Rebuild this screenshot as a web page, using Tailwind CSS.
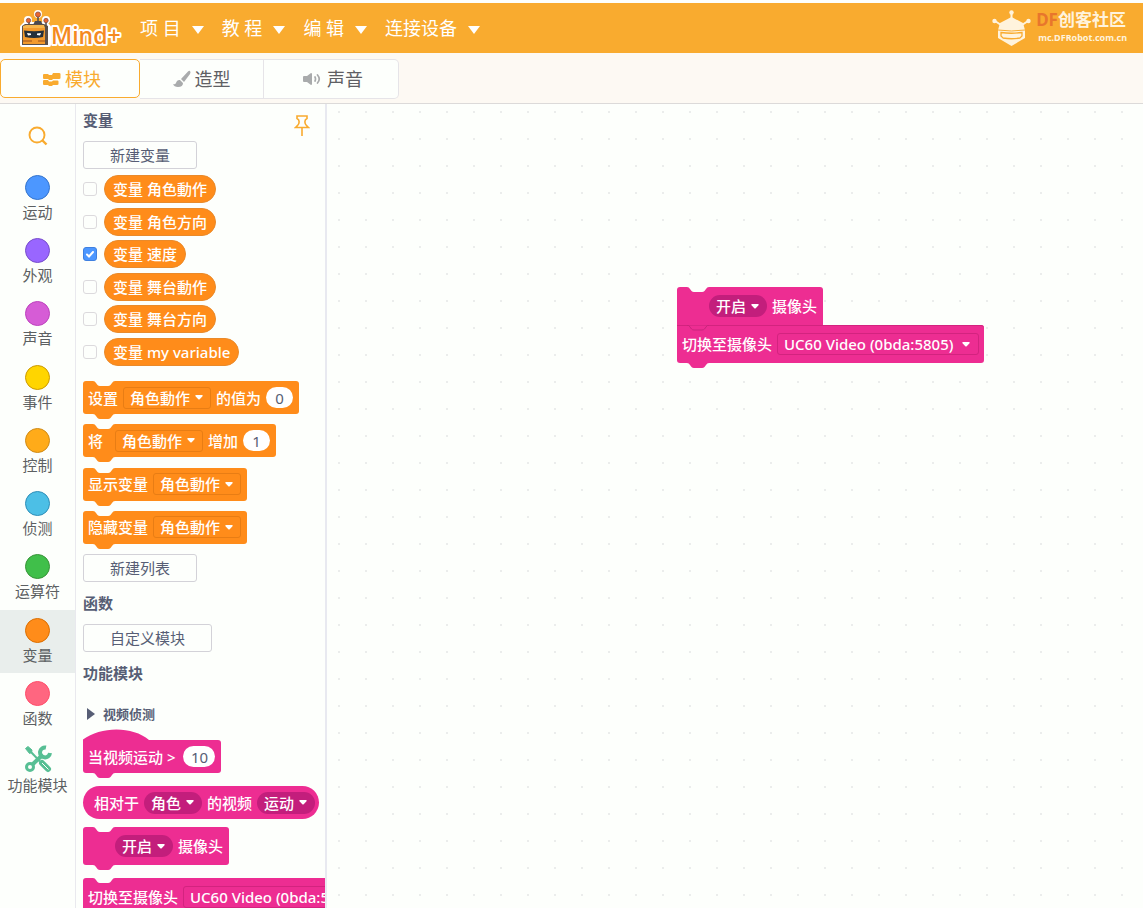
<!DOCTYPE html>
<html lang="zh-CN">
<head>
<meta charset="utf-8">
<title>Mind+</title>
<script src="https://cdn.jsdelivr.net/npm/@tailwindcss/browser@4"></script>
</head>
<body class="h-screen overflow-hidden flex flex-col bg-[#fdfffc] font-['Noto_Sans','Noto_Sans_CJK_SC',sans-serif] text-[15px] leading-5 text-[#575e75]">

<svg class="hidden" aria-hidden="true">
  <symbol id="notch" viewBox="0 0 22 6"><path d="M0 0Q2 0 3 2L4.500 4Q5.500 5 7 5H15Q16.500 5 17.500 4L19 2Q20 0 22 0Z"/></symbol>
  <symbol id="caret" viewBox="0 0 8 5"><path d="M1 0H7Q8.300 .3 7.300 1.400L4.700 4.200Q4 4.900 3.300 4.200L.7 1.400Q-.3 .3 1 0Z" fill="#fff"/></symbol>
  <symbol id="down" viewBox="0 0 12 8"><path d="M0 0H12L6 8Z" fill="#fff"/></symbol>
</svg>

<header class="mt-[3px] h-[50px] shrink-0 bg-[#f9ab2f] flex items-center justify-between pl-5 pr-4 text-white">
  <div class="flex items-center">
    <svg class="w-[104px] h-10 shrink-0" viewBox="0 0 104 40" role="img" aria-label="Mind+">
      <g stroke="#fff" stroke-width="4" stroke-linejoin="round" fill="#fff"><path d="M2 19L5 16H26L29 19V37H2Z"/><circle cx="18" cy="6" r="2"/><circle cx="8" cy="12" r="2"/><circle cx="26" cy="12" r="2"/></g>
      <path d="M9 13V18M18 8V17M26 13V18" stroke="#4b4a4f" stroke-width="1.500"/>
      <path d="M13 17L15 13H21L23 17Z" fill="#4b4a4f"/>
      <circle cx="18" cy="6.500" r="2.600" fill="#e9652f" stroke="#7a4a40" stroke-width=".7"/><circle cx="8.500" cy="12.500" r="2.200" fill="#e9652f" stroke="#7a4a40" stroke-width=".7"/><circle cx="26" cy="12.500" r="2.200" fill="#e9652f" stroke="#7a4a40" stroke-width=".7"/>
      <path d="M2 18L5 16H24L28 18V37H2Z" fill="#5b5048"/>
      <path d="M3 20H25V36H3Z" fill="#f39a2c"/><path d="M3 18L6 17H24L25 20H3Z" fill="#f7b64b"/>
      <path d="M4 22.500Q14 24 24 22.500L23 29Q14 31 5 29Z" fill="#25303a"/>
      <path d="M7 25L11 25.500V27L8 27.500ZM21 25L17 25.500V27L20 27.500Z" fill="#fff"/>
      <path d="M3 32H12V34H3ZM18 32H25V34H18Z" fill="#c97523"/>
      <text x="31" y="36" font-family="Open Sans" font-weight="600" font-size="23" fill="#f58a1f" stroke="#fff" stroke-width="4" stroke-linejoin="round" paint-order="stroke">Mind+</text>
    </svg>
    <nav class="flex items-center pl-4 gap-[18px] text-lg">
      <button class="flex items-center gap-[11px]">项 目<svg class="w-3 h-2 mt-1"><use href="#down"/></svg></button>
      <button class="flex items-center gap-[11px]">教 程<svg class="w-3 h-2 mt-1"><use href="#down"/></svg></button>
      <button class="flex items-center gap-[11px]">编 辑<svg class="w-3 h-2 mt-1"><use href="#down"/></svg></button>
      <button class="flex items-center gap-[11px]">连接设备<svg class="w-3 h-2 mt-1"><use href="#down"/></svg></button>
    </nav>
  </div>
  <a href="#" class="flex items-center gap-[5px] text-[#fff3dd]">
    <svg class="w-[39px] h-[37px]" viewBox="0 0 39 37" aria-hidden="true">
      <g fill="#fff3dd"><circle cx="19.500" cy="2.500" r="2.200"/><circle cx="2.500" cy="11" r="2.200"/><circle cx="36.500" cy="11" r="2.200"/><path d="M19.500 7L31 13L33 20V28L19.500 36L6 28V20L8 13Z"/></g>
      <path d="M19.500 2V9M3 11L9 15M36 11L30 15" stroke="#fff3dd" stroke-width="2"/>
      <path d="M6 20Q19.500 22 33 20" fill="none" stroke="#f9ab2f" stroke-width="1"/>
      <path d="M9 22.500Q19.500 24 30 22.500V26L28 28Q19.500 29.500 11 28L9 26Z" fill="#fff3dd" stroke="#f9ab2f" stroke-width="1.300"/>
    </svg>
    <span class="flex flex-col font-bold">
      <span class="text-[17px] leading-5"><span class="text-[#e8762c]">DF</span>创客社区</span>
      <span class="text-[9px] leading-4 pl-[2px]">mc.DFRobot.com.cn</span>
    </span>
  </a>
</header>

<div class="h-[51px] shrink-0 bg-[#fdf9f3] border-b border-[#dcdad9] flex items-start pt-[6px]">
  <div role="tablist" class="flex h-10 text-lg text-[#5f6064]">
    <button role="tab" aria-selected="true" class="w-[140px] h-[39px] flex items-center justify-center gap-1 rounded-[5px] border border-[#f9ab2f] bg-[#fdfffc] text-[#f9ab2f] pl-1">
      <svg class="w-[18px] h-4" viewBox="0 0 18 16" fill="currentColor"><path d="M1 3Q0 3 0 4V7Q0 8 1 8H5L6 9H9L10 8H16Q17.500 8 17.500 7V3Q17.500 2 16 2H10L9 4H6L5 3ZM1 9Q0 9 0 10V13Q0 14 1 14H5L6 15H9L10 14H14Q15.500 14 15.500 13V10.500Q15.500 9.500 14.500 9.500H10L9 10.500H6L5 9Z"/></svg>模块</button>
    <button role="tab" class="w-[124px] flex items-center justify-center gap-1 border-y border-r border-[#e6e4e8] bg-[#fdfffc]">
      <svg class="w-[18px] h-[18px]" viewBox="0 0 18 18" fill="#a9abac"><path d="M17 1Q18 2 17 4L11 12L8 9L15 1.500Q16.300 .3 17 1ZM7 10L10 13Q10 17 5 17Q1 17 0 14Q2 15 3 13Q4 9.500 7 10Z"/></svg>造型</button>
    <button role="tab" class="w-[135px] flex items-center justify-center gap-[6px] pl-1 rounded-r-[5px] border-y border-r border-[#e6e4e8] bg-[#fdfffc]">
      <svg class="w-[18px] h-4" viewBox="0 0 18 16"><path d="M0 6Q0 5 1 5H4L8 2Q9 2 9 3V13Q9 14 8 14L4 11H1Q0 11 0 10Z" fill="#a9abac"/><path d="M12 6Q13 8 12 10M14.500 4Q18 8 14.500 12" fill="none" stroke="#a9abac" stroke-width="1.700" stroke-linecap="round"/></svg>声音</button>
  </div>
</div>

<main class="flex flex-1 min-h-0">
  <nav class="w-[76px] shrink-0 border-r border-[#e9e9ee] flex flex-col text-[#5c6062]">
    <button class="h-[63px] shrink-0 flex justify-center pt-[22px]" aria-label="搜索"><svg class="w-5 h-5" viewBox="0 0 20 20" fill="none" stroke="#f9ab2f"><circle cx="9" cy="9" r="7.500" stroke-width="1.900"/><path d="M14.500 14.500L18.500 18.500" stroke-width="2.400"/></svg></button>
    <div class="grid grid-rows-9 h-[569px] shrink-0">
      <button class="flex flex-col items-center pt-2 gap-[2px]"><i class="size-[25px] rounded-full bg-[#4c97ff] border border-[#3373cc]"></i>运动</button>
      <button class="flex flex-col items-center pt-2 gap-[2px]"><i class="size-[25px] rounded-full bg-[#9966ff] border border-[#774dcb]"></i>外观</button>
      <button class="flex flex-col items-center pt-2 gap-[2px]"><i class="size-[25px] rounded-full bg-[#d65cd6] border border-[#bd42bd]"></i>声音</button>
      <button class="flex flex-col items-center pt-2 gap-[2px]"><i class="size-[25px] rounded-full bg-[#ffd500] border border-[#cc9900]"></i>事件</button>
      <button class="flex flex-col items-center pt-2 gap-[2px]"><i class="size-[25px] rounded-full bg-[#ffab19] border border-[#cf8b17]"></i>控制</button>
      <button class="flex flex-col items-center pt-2 gap-[2px]"><i class="size-[25px] rounded-full bg-[#4cbfe6] border border-[#2e8eb8]"></i>侦测</button>
      <button class="flex flex-col items-center pt-2 gap-[2px]"><i class="size-[25px] rounded-full bg-[#40bf4a] border border-[#389438]"></i>运算符</button>
      <button class="flex flex-col items-center pt-2 gap-[2px] bg-[#e9eeec]"><i class="size-[25px] rounded-full bg-[#ff8c1a] border border-[#db6e00]"></i>变量</button>
      <button class="flex flex-col items-center pt-2 gap-[2px]"><i class="size-[25px] rounded-full bg-[#ff6680] border border-[#ff4d6a]"></i>函数</button>
    </div>
    <button class="flex flex-col items-center pt-[9px] gap-[2px]">
      <svg class="w-7 h-7" viewBox="0 0 28 28" fill="none" stroke="#57bf94">
        <path d="M1.500 3.500L4 1.500L8 5L7.500 7.500L5.500 8.500Z" fill="#57bf94" stroke-width="1"/>
        <path d="M7 7L16 16.500" stroke-width="2"/><path d="M18 18L24 24" stroke-width="6" stroke-linecap="round"/><path d="M18 18L24.500 24.500" stroke="#fdfffc" stroke-width="1"/>
        <circle cx="6" cy="22" r="3.500" stroke-width="3"/><path d="M9 19L19 9.500" stroke-width="4"/>
        <path d="M22 2.500A5 5 0 1 0 26 8" stroke-width="4"/>
      </svg>功能模块</button>
  </nav>

  <section class="w-[249px] shrink-0 overflow-hidden pl-[7px] pt-[6px] flex flex-col items-start whitespace-nowrap">
    <div class="w-full h-5 flex justify-between items-start pr-[15px]"><h2 class="font-bold">变量</h2>
      <button aria-label="固定" class="mt-[5px]"><svg class="w-4 h-[22px]" viewBox="0 0 16 22" fill="none" stroke="#f9ab2f" stroke-width="1.600"><path d="M3 1H13V3.500Q10.500 4.500 11 7.500Q11 9.500 14.500 12.500H1.500Q5 9.500 5 7.500Q5.500 4.500 3 3.500ZM8 13V21"/></svg></button></div>
    <button class="mt-[11px] w-[114px] h-7 shrink-0 border border-[#d3d2d8] rounded-[3px]">新建变量</button>

    <div class="mt-1 h-[195px] shrink-0 grid grid-rows-6 items-center text-white font-medium">
      <label class="flex items-center gap-[7px]"><input type="checkbox" class="appearance-none size-[14px] rounded-[3px] border border-[#dcdadd]"><span class="h-7 px-2 flex items-center rounded-full bg-[#ff8c1a] border border-[#ea8a2a]">变量 角色動作</span></label>
      <label class="flex items-center gap-[7px]"><input type="checkbox" class="appearance-none size-[14px] rounded-[3px] border border-[#dcdadd]"><span class="h-7 px-2 flex items-center rounded-full bg-[#ff8c1a] border border-[#ea8a2a]">变量 角色方向</span></label>
      <label class="flex items-center gap-[7px]"><span class="grid size-[14px]"><input type="checkbox" checked class="col-start-1 row-start-1 appearance-none size-[14px] rounded-[3px] bg-[#4c97ff] border border-[#3f80e0]"><svg class="col-start-1 row-start-1 size-[14px]" viewBox="0 0 14 14" fill="none" stroke="#fff" stroke-width="2" stroke-linecap="round"><path d="M4 7.500L6 9.500L10 5"/></svg></span><span class="h-7 px-2 flex items-center rounded-full bg-[#ff8c1a] border border-[#ea8a2a]">变量 速度</span></label>
      <label class="flex items-center gap-[7px]"><input type="checkbox" class="appearance-none size-[14px] rounded-[3px] border border-[#dcdadd]"><span class="h-7 px-2 flex items-center rounded-full bg-[#ff8c1a] border border-[#ea8a2a]">变量 舞台動作</span></label>
      <label class="flex items-center gap-[7px]"><input type="checkbox" class="appearance-none size-[14px] rounded-[3px] border border-[#dcdadd]"><span class="h-7 px-2 flex items-center rounded-full bg-[#ff8c1a] border border-[#ea8a2a]">变量 舞台方向</span></label>
      <label class="flex items-center gap-[7px]"><input type="checkbox" class="appearance-none size-[14px] rounded-[3px] border border-[#dcdadd]"><span class="h-7 px-2 flex items-center rounded-full bg-[#ff8c1a] border border-[#ea8a2a]">变量 my variable</span></label>
    </div>

    <div class="mt-[13px] h-[173px] shrink-0 grid grid-rows-4 items-start justify-items-start text-white font-medium">
      <div class="relative h-[33px] flex items-center gap-[5px] pl-[5px] pr-[6px] rounded-[3px] bg-[#ff8c1a]">
        <svg class="absolute left-[10px] top-0 w-[22px] h-[6px] fill-[#fdfffc]"><use href="#notch"/></svg><svg class="absolute left-[10px] top-full w-[22px] h-[6px] fill-[#ff8c1a]"><use href="#notch"/></svg>
        <span>设置</span>
        <span class="grid items-center"><select aria-label="变量" class="col-start-1 row-start-1 appearance-none w-[88px] h-[22px] pl-[6px] rounded-[3px] border border-[#e87d14]"><option>角色動作</option></select><svg class="col-start-1 row-start-1 justify-self-end mr-2 w-2 h-[5px] pointer-events-none"><use href="#caret"/></svg></span>
        <span>的值为</span><input aria-label="值" value="0" class="w-[27px] h-[21px] rounded-full bg-white text-center text-[#575e75] font-normal">
      </div>
      <div class="relative h-[33px] flex items-center gap-[5px] pl-[5px] pr-[6px] rounded-[3px] bg-[#ff8c1a]">
        <svg class="absolute left-[10px] top-0 w-[22px] h-[6px] fill-[#fdfffc]"><use href="#notch"/></svg><svg class="absolute left-[10px] top-full w-[22px] h-[6px] fill-[#ff8c1a]"><use href="#notch"/></svg>
        <span class="w-[22px]">将</span>
        <span class="grid items-center"><select aria-label="变量" class="col-start-1 row-start-1 appearance-none w-[88px] h-[22px] pl-[6px] rounded-[3px] border border-[#e87d14]"><option>角色動作</option></select><svg class="col-start-1 row-start-1 justify-self-end mr-2 w-2 h-[5px] pointer-events-none"><use href="#caret"/></svg></span>
        <span>增加</span><input aria-label="增加值" value="1" class="w-[27px] h-[21px] rounded-full bg-white text-center text-[#575e75] font-normal">
      </div>
      <div class="relative h-[33px] flex items-center gap-[5px] pl-[5px] pr-[6px] rounded-[3px] bg-[#ff8c1a]">
        <svg class="absolute left-[10px] top-0 w-[22px] h-[6px] fill-[#fdfffc]"><use href="#notch"/></svg><svg class="absolute left-[10px] top-full w-[22px] h-[6px] fill-[#ff8c1a]"><use href="#notch"/></svg>
        <span>显示变量</span>
        <span class="grid items-center"><select aria-label="变量" class="col-start-1 row-start-1 appearance-none w-[88px] h-[22px] pl-[6px] rounded-[3px] border border-[#e87d14]"><option>角色動作</option></select><svg class="col-start-1 row-start-1 justify-self-end mr-2 w-2 h-[5px] pointer-events-none"><use href="#caret"/></svg></span>
      </div>
      <div class="relative h-[33px] flex items-center gap-[5px] pl-[5px] pr-[6px] rounded-[3px] bg-[#ff8c1a]">
        <svg class="absolute left-[10px] top-0 w-[22px] h-[6px] fill-[#fdfffc]"><use href="#notch"/></svg><svg class="absolute left-[10px] top-full w-[22px] h-[6px] fill-[#ff8c1a]"><use href="#notch"/></svg>
        <span>隐藏变量</span>
        <span class="grid items-center"><select aria-label="变量" class="col-start-1 row-start-1 appearance-none w-[88px] h-[22px] pl-[6px] rounded-[3px] border border-[#e87d14]"><option>角色動作</option></select><svg class="col-start-1 row-start-1 justify-self-end mr-2 w-2 h-[5px] pointer-events-none"><use href="#caret"/></svg></span>
      </div>
    </div>

    <button class="w-[114px] h-7 shrink-0 border border-[#d3d2d8] rounded-[3px]">新建列表</button>
    <h2 class="mt-[11px] font-bold">函数</h2>
    <button class="mt-[11px] w-[129px] h-7 shrink-0 border border-[#d3d2d8] rounded-[3px]">自定义模块</button>
    <h2 class="mt-[11px] font-bold">功能模块</h2>
    <button class="mt-[21px] pl-1 flex items-center gap-2 text-[13px] leading-5 font-bold"><svg class="w-2 h-3" viewBox="0 0 8 12"><path d="M0 0L8 6L0 12Z" fill="#575e75"/></svg>视频侦测</button>

    <div class="mt-4 relative h-[33px] shrink-0 flex items-center gap-2 pl-[5px] pr-[6px] rounded-[3px] bg-[#ed2d92] text-white font-medium">
      <svg class="absolute left-0 bottom-full -mb-[3px] w-[70px] h-[14px]" viewBox="0 0 70 14" fill="#ed2d92"><path d="M0 14V10.500C18 -3 50 -3 66 11L70 14Z"/></svg>
      <svg class="absolute left-[10px] top-full w-[22px] h-[6px] fill-[#ed2d92]"><use href="#notch"/></svg>
      <span>当视频运动 &gt;</span><input aria-label="视频运动" value="10" class="w-[32px] h-[21px] rounded-full bg-white text-center text-[#575e75] font-normal">
    </div>
    <div class="mt-[13px] h-[33px] shrink-0 flex items-center gap-[5px] pl-[11px] pr-1 rounded-full bg-[#ed2d92] text-white font-medium">
      <span>相对于</span>
      <span class="grid items-center"><select aria-label="对象" class="col-start-1 row-start-1 appearance-none w-[58px] h-[22px] pl-[7px] rounded-full bg-[#c31e7c]"><option>角色</option></select><svg class="col-start-1 row-start-1 justify-self-end mr-2 w-2 h-[5px] pointer-events-none"><use href="#caret"/></svg></span>
      <span>的视频</span>
      <span class="grid items-center"><select aria-label="属性" class="col-start-1 row-start-1 appearance-none w-[58px] h-[22px] pl-[7px] rounded-full bg-[#c31e7c]"><option>运动</option></select><svg class="col-start-1 row-start-1 justify-self-end mr-2 w-2 h-[5px] pointer-events-none"><use href="#caret"/></svg></span>
    </div>
    <div class="mt-2 relative h-[38px] shrink-0 flex items-center gap-[5px] pl-8 pr-[6px] rounded-[3px] bg-[#ed2d92] text-white font-medium">
      <svg class="absolute left-[10px] top-0 w-[22px] h-[6px] fill-[#fdfffc]"><use href="#notch"/></svg><svg class="absolute left-[10px] top-full w-[22px] h-[6px] fill-[#ed2d92]"><use href="#notch"/></svg>
      <span class="grid items-center"><select aria-label="状态" class="col-start-1 row-start-1 appearance-none w-[58px] h-[22px] pl-[7px] rounded-full bg-[#c31e7c]"><option>开启</option></select><svg class="col-start-1 row-start-1 justify-self-end mr-2 w-2 h-[5px] pointer-events-none"><use href="#caret"/></svg></span>
      <span>摄像头</span>
    </div>
    <div class="mt-[13px] relative h-[38px] shrink-0 flex items-center gap-[5px] px-[5px] rounded-[3px] bg-[#ed2d92] text-white font-medium">
      <svg class="absolute left-[10px] top-0 w-[22px] h-[6px] fill-[#fdfffc]"><use href="#notch"/></svg>
      <span>切换至摄像头</span>
      <span class="grid items-center"><select aria-label="摄像头" class="col-start-1 row-start-1 appearance-none w-[202px] h-[22px] pl-[6px] rounded-[3px] border border-[#d3237f]"><option>UC60 Video (0bda:5805)</option></select><svg class="col-start-1 row-start-1 justify-self-end mr-[9px] w-2 h-[5px] pointer-events-none"><use href="#caret"/></svg></span>
    </div>
  </section>

  <section aria-label="脚本区" class="relative flex-1 min-w-0 border-l-2 border-[#e8e9f0]">
    <svg class="absolute inset-0 w-full h-full" aria-hidden="true"><defs><pattern id="dots" x="11" y="7" width="27" height="27" patternUnits="userSpaceOnUse"><rect width="2" height="2" fill="#ebedec"/></pattern></defs><rect width="100%" height="100%" fill="url(#dots)"/></svg>
    <div class="absolute left-[350px] top-[183px] flex flex-col items-start whitespace-nowrap text-white font-medium">
      <div class="relative z-10 h-[38px] flex items-center gap-[5px] pl-8 pr-[6px] rounded-t-[3px] bg-[#ed2d92]">
        <svg class="absolute left-[10px] top-0 w-[22px] h-[6px] fill-[#fdfffc]"><use href="#notch"/></svg><svg class="absolute left-[10px] top-full w-[22px] h-[6px] fill-[#ed2d92] stroke-[#c9257c]"><use href="#notch"/></svg>
        <span class="grid items-center"><select aria-label="状态" class="col-start-1 row-start-1 appearance-none w-[58px] h-[22px] pl-[7px] rounded-full bg-[#c31e7c]"><option>开启</option></select><svg class="col-start-1 row-start-1 justify-self-end mr-2 w-2 h-[5px] pointer-events-none"><use href="#caret"/></svg></span>
        <span>摄像头</span>
      </div>
      <div class="relative h-[38px] flex items-center gap-[5px] px-[5px] rounded-[3px] rounded-tl-none bg-[#ed2d92] shadow-[inset_0_1px_0_#d3237f]">
        <svg class="absolute left-[10px] top-full w-[22px] h-[6px] fill-[#ed2d92]"><use href="#notch"/></svg>
        <span>切换至摄像头</span>
        <span class="grid items-center"><select aria-label="摄像头" class="col-start-1 row-start-1 appearance-none w-[202px] h-[22px] pl-[6px] rounded-[3px] border border-[#d3237f]"><option>UC60 Video (0bda:5805)</option></select><svg class="col-start-1 row-start-1 justify-self-end mr-[9px] w-2 h-[5px] pointer-events-none"><use href="#caret"/></svg></span>
      </div>
    </div>
  </section>
</main>
</body>
</html>
